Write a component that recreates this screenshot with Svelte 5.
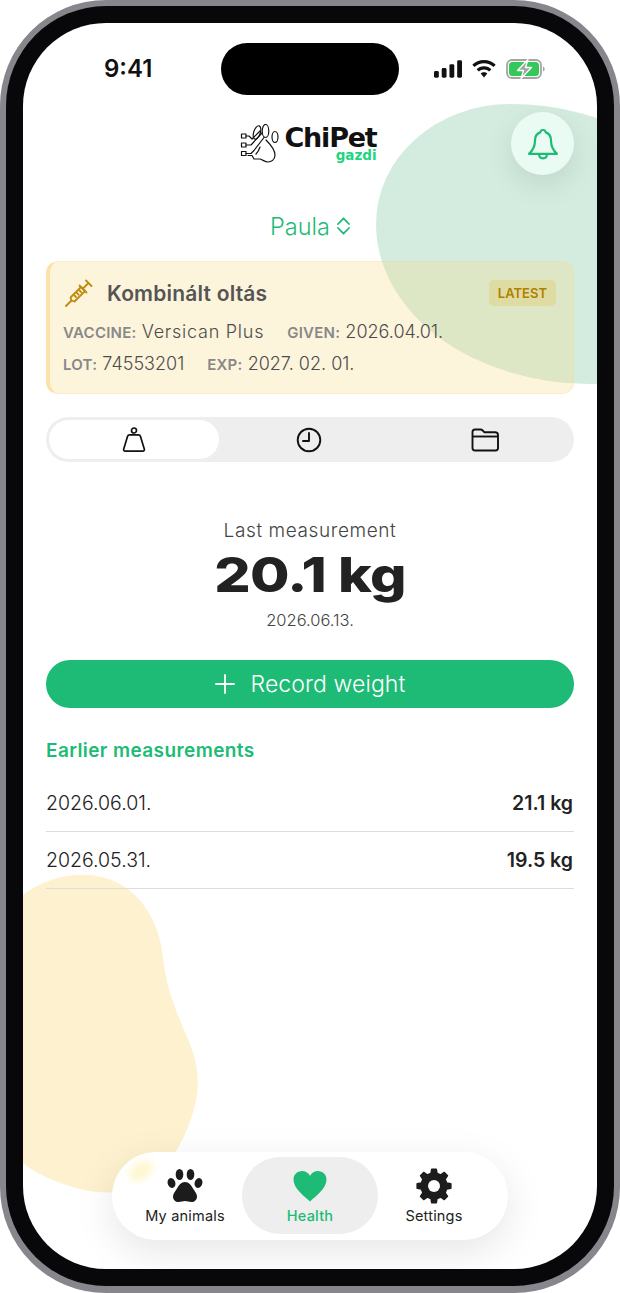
<script>
  const rows = [
    { date: '2026.06.01.', value: '21.1 kg' },
    { date: '2026.05.31.', value: '19.5 kg' }
  ]

  // gear outline for the settings tab, 8 teeth
  function gearPath(cx, cy, outer, inner, teeth) {
    const step = (Math.PI * 2) / teeth
    let d = ''
    for (let i = 0; i < teeth; i++) {
      const a = i * step - Math.PI / 2
      const pts = [
        [inner, a - step * 0.3],
        [outer, a - step * 0.17],
        [outer, a + step * 0.17],
        [inner, a + step * 0.3]
      ]
      for (const [r, t] of pts) {
        const x = (cx + r * Math.cos(t)).toFixed(2)
        const y = (cy + r * Math.sin(t)).toFixed(2)
        d += (d ? 'L' : 'M') + x + ' ' + y
      }
    }
    return d + 'Z'
  }
</script>

<div class="phone">
  <div class="bezel">
    <div class="screen">
      <div class="blob-green"></div>
      <svg class="blob-yellow" width="176" height="322" viewBox="0 0 176 322">
        <path d="M0 22C22 4 58-4 86 6c30 11 50 40 54 78 3 32 14 56 24 80 10 22 14 44 8 68-8 32-26 64-48 78-22 12-48 12-74 4C30 308 12 300 0 290Z" />
      </svg>

      <div class="status">
        <span class="time">9:41</span>
        <div class="island"></div>
        <div class="status-icons">
          <svg width="28" height="18" viewBox="0 0 29 18">
            <rect x="0" y="11" width="5" height="7" rx="1.500" />
            <rect x="8" y="8" width="5" height="10" rx="1.500" />
            <rect x="16" y="4" width="5" height="14" rx="1.500" />
            <rect x="24" y="0" width="5" height="18" rx="1.500" />
          </svg>
          <svg width="24" height="18" viewBox="0 0 24 18">
            <path d="M12 0C7.400 0 3.300 1.800.3 4.800l2.200 2.300C5 4.700 8.300 3.200 12 3.200s7 1.500 9.500 3.900l2.200-2.300C20.700 1.800 16.600 0 12 0Z" />
            <path d="M12 6.200c-2.900 0-5.500 1.100-7.400 3l2.200 2.300c1.400-1.300 3.200-2.100 5.200-2.100s3.800.8 5.200 2.100l2.200-2.300c-1.900-1.900-4.500-3-7.400-3Z" />
            <path d="M12 12.300c-1.300 0-2.500.5-3.300 1.300L12 17.400l3.300-3.800c-.8-.8-2-1.300-3.300-1.300Z" />
          </svg>
          <svg width="39" height="20" viewBox="0 0 39 20">
            <rect x="1" y="1" width="34" height="18" rx="5" fill="none" stroke="#a3a4a3" stroke-width="1.800" />
            <rect x="3" y="3" width="30" height="14" rx="3.500" fill="#34c759" />
            <path d="M37 7.500c1.100.4 1.700 1.300 1.700 2.500s-.6 2.100-1.700 2.500Z" fill="#a3a4a3" />
            <path d="M22 .5 11.500 11.500h6L15 19.500 25.500 8.500h-6Z" fill="#a3a4a3" stroke="#fff" stroke-width="1.300" stroke-linejoin="round" />
          </svg>
        </div>
      </div>

      <main class="content">
        <header class="top">
          <span></span>
          <div class="logo">
            <svg width="40" height="39" viewBox="0 0 40 39" fill="none" stroke="#111" stroke-width="1.200" stroke-linecap="round" stroke-linejoin="round">
              <rect x="1.500" y="10" width="4.500" height="4" />
              <rect x="1.500" y="19" width="4.500" height="4" />
              <rect x="1.500" y="27.500" width="4.500" height="4" />
              <ellipse cx="17" cy="8.500" rx="3.300" ry="7" transform="rotate(18 17 8.500)" />
              <ellipse cx="25.500" cy="7" rx="3.300" ry="6.500" />
              <ellipse cx="35" cy="13" rx="3" ry="5.500" />
              <path d="M6 12h3l3 3 8-8M6 21h5l11-12M6 29.500h5l3-3 10-13" />
              <path d="M26 16c3 3 9 9 9 15 0 5-4 7-7 7-3 0-5-2-8-3h-6l-2-3.500H8M20 23c-1 3-2 5-4 7" />
            </svg>
            <div class="logo-text">
              <span class="brand">ChiPet</span>
              <span class="sub">gazdi</span>
            </div>
          </div>
          <button class="bell" aria-label="Notifications">
            <svg width="32" height="32" viewBox="0 0 32 32" fill="none" stroke="#1dbb75" stroke-width="2.200" stroke-linecap="round" stroke-linejoin="round">
              <path d="M16 2c-1.500 0-2.500 1-2.700 2.400C9.800 5.500 8 8.800 8 12.500c0 6-1.500 9.500-6 13.300h28c-4.500-3.800-6-7.300-6-13.300 0-3.700-1.800-7-5.300-8.100C18.500 3 17.500 2 16 2Z" />
              <path d="M12 26c0 2.800 1.800 4.300 4 4.300s4-1.500 4-4.300" />
            </svg>
          </button>
        </header>

        <button class="pet">
          Paula
          <svg width="13" height="18" viewBox="0 0 13 18" fill="none" stroke="#1dbb75" stroke-width="1.800" stroke-linecap="round" stroke-linejoin="round">
            <path d="M1 7 6.500 1.300 12 7M1 11l5.500 5.700L12 11" />
          </svg>
        </button>

        <section class="vaccine">
          <div class="vaccine-head">
            <svg width="28" height="28" viewBox="0 0 28 28" fill="none" stroke="#c08a10" stroke-width="1.800" stroke-linecap="round" stroke-linejoin="round">
              <path d="M1 27l5.500-5.500" />
              <path d="M6.500 21.500l-1-3L16 8l4 4L9.500 22.500Z" />
              <path d="M14.500 6.500l7 7M18 9.500l5.500-5.500M21 1.500l5.500 5.500M9.500 16.500l1.500 1.500M12 14l1.500 1.500M14.500 11.500l1.500 1.500" />
            </svg>
            <h2>Kombinált oltás</h2>
            <span class="badge">LATEST</span>
          </div>
          <div class="vaccine-line">
            <span class="item"><b>VACCINE:</b> <span class="name">Versican Plus</span></span>
            <span class="item"><b>GIVEN:</b> 2026.04.01.</span>
          </div>
          <div class="vaccine-line">
            <span class="item"><b>LOT:</b> 74553201</span>
            <span class="item"><b>EXP:</b> 2027. 02. 01.</span>
          </div>
        </section>

        <div class="tabs">
          <button class="tab active" aria-label="Weight">
            <svg width="24" height="26" viewBox="0 0 24 26" fill="none" stroke="#111" stroke-width="1.700" stroke-linejoin="round">
              <circle cx="12" cy="3.500" r="2.500" />
              <path d="M7.500 7.800h9c1 0 1.600.5 1.900 1.400l3.900 12.800c.4 1.300-.3 2.200-1.600 2.200H3.300c-1.300 0-2-.9-1.600-2.200L5.600 9.200c.3-.9.900-1.400 1.900-1.400Z" />
            </svg>
          </button>
          <button class="tab" aria-label="History">
            <svg width="26" height="26" viewBox="0 0 26 26" fill="none" stroke="#111" stroke-width="1.900" stroke-linecap="round" stroke-linejoin="round">
              <circle cx="13" cy="13" r="11.300" />
              <path d="M13 6v8H7" />
            </svg>
          </button>
          <button class="tab" aria-label="Documents">
            <svg width="28" height="24" viewBox="0 0 28 24" fill="none" stroke="#111" stroke-width="1.900" stroke-linejoin="round">
              <path d="M1.500 4c0-1.500.8-2.500 2.500-2.500h5.500c1 0 1.600.4 2.200 1l1.800 1.800h10.500c1.500 0 3 .7 3 2.700v13c0 1.800-1 2.500-2.500 2.500H4c-1.700 0-2.500-.9-2.500-2.500Z" />
              <path d="M1.500 8.500h25" />
            </svg>
          </button>
        </div>

        <section class="last">
          <p class="last-label">Last measurement</p>
          <p class="last-value">20.1 kg</p>
          <p class="last-date">2026.06.13.</p>
        </section>

        <button class="record">
          <svg width="20" height="20" viewBox="0 0 20 20" fill="none" stroke="#fff" stroke-width="1.800" stroke-linecap="round">
            <path d="M10 1v18M1 10h18" />
          </svg>
          Record weight
        </button>

        <h3 class="earlier">Earlier measurements</h3>
        <ul class="list">
          {#each rows as row}
            <li>
              <span>{row.date}</span>
              <strong>{row.value}</strong>
            </li>
          {/each}
        </ul>
      </main>

      <nav class="nav">
        <span class="glare"></span>
        <button class="nav-item">
          <svg width="36" height="36" viewBox="0 0 36 36" fill="#1c1c1c">
            <ellipse cx="4.500" cy="15" rx="3.800" ry="5" transform="rotate(-18 4.500 15)" />
            <ellipse cx="12.500" cy="6.500" rx="3.800" ry="5.500" />
            <ellipse cx="23.500" cy="6.500" rx="3.800" ry="5.500" />
            <ellipse cx="31.500" cy="15" rx="3.800" ry="5" transform="rotate(18 31.500 15)" />
            <path d="M18 14c-4 0-6 3-8 6.500-2 3-4 5.500-4 8 0 3.500 2.500 5.500 5.500 5.500 2.500 0 4.500-1 6.500-1s4 1 6.500 1c3 0 5.500-2 5.500-5.500 0-2.500-2-5-4-8-2-3.500-4-6.500-8-6.500Z" />
          </svg>
          <span>My animals</span>
        </button>
        <button class="nav-item active">
          <svg width="36" height="36" viewBox="0 0 36 36" fill="#1dbb75">
            <path d="M18 33.500C12 28 1.500 20.500 1.500 11.500 1.500 6.500 5.500 3 10 3c3.300 0 6.300 1.700 8 4.800C19.700 4.700 22.700 3 26 3c4.500 0 8.500 3.500 8.500 8.500 0 9-10.500 16.500-16.500 22Z" />
          </svg>
          <span>Health</span>
        </button>
        <button class="nav-item">
          <svg width="36" height="36" viewBox="0 0 36 36">
            <path d={gearPath(18, 18, 17, 13, 8)} fill="#1c1c1c" stroke="#1c1c1c" stroke-width="1.500" stroke-linejoin="round" />
            <circle cx="18" cy="18" r="6" fill="#fff" />
          </svg>
          <span>Settings</span>
        </button>
      </nav>
    </div>
  </div>
</div>

<style>
  :global(body) {
    margin: 0;
    background: #fff;
  }
  p, h2, h3, ul {
    margin: 0;
    padding: 0;
  }
  button {
    border: 0;
    background: none;
    padding: 0;
    font: inherit;
    cursor: pointer;
  }
  .phone {
    width: 620px;
    height: 1293px;
    box-sizing: border-box;
    padding: 6px 6px 7px;
    border-radius: 106px;
    background: #87868c;
    font-family: Inter, sans-serif;
    color: #1c1c1c;
  }
  .bezel {
    height: 100%;
    box-sizing: border-box;
    padding: 17px;
    border-radius: 100px;
    background: #08080a;
  }
  .screen {
    position: relative;
    height: 100%;
    border-radius: 83px;
    background: #fff;
    overflow: hidden;
  }
  .blob-green {
    position: absolute;
    left: 353px;
    top: 81px;
    width: 319px;
    height: 280px;
    border-radius: 134px 185px 105px 214px / 120px 120px 160px 160px;
    background: #d3ecdf;
  }
  .blob-yellow {
    position: absolute;
    left: 0;
    top: 850px;
    fill: #fdf1cf;
  }

  .status {
    position: relative;
    display: grid;
    grid-template-columns: 1fr 178px 1fr;
    align-items: center;
    padding-top: 20px;
  }
  .time {
    padding-left: 81px;
    font-size: 24px;
    font-weight: 600;
    color: #111;
    line-height: 50px;
  }
  .island {
    height: 52px;
    border-radius: 26px;
    background: #000;
  }
  .status-icons {
    display: flex;
    align-items: center;
    gap: 10px;
    padding-left: 35px;
    fill: #111;
  }

  .content {
    position: relative;
    padding: 17px 23px 0;
  }
  .top {
    display: grid;
    grid-template-columns: 1fr auto 1fr;
    align-items: center;
  }
  .logo {
    display: flex;
    align-items: center;
    gap: 4px;
    margin-left: -3px;
  }
  .logo-text {
    display: flex;
    flex-direction: column;
    align-items: flex-end;
    margin-top: 1px;
  }
  .brand {
    font-family: "DejaVu Sans", sans-serif;
    font-size: 27px;
    font-weight: 700;
    line-height: 22px;
    letter-spacing: -1.200px;
    color: #111;
  }
  .sub {
    font-family: "DejaVu Sans", sans-serif;
    font-size: 13.500px;
    font-weight: 700;
    line-height: 12px;
    color: #1ed47f;
  }
  .bell {
    justify-self: end;
    display: flex;
    align-items: center;
    justify-content: center;
    width: 63px;
    height: 63px;
    border-radius: 50%;
    background: #eafbf4;
    box-shadow: 0 10px 30px rgba(0, 0, 0, 0.09);
  }

  .pet {
    display: flex;
    align-items: center;
    justify-content: center;
    gap: 7px;
    width: 100%;
    height: 30px;
    margin-top: 36px;
    font-size: 23.500px;
    font-weight: 300;
    color: #1dbb75;
  }

  .vaccine {
    height: 133px;
    box-sizing: border-box;
    margin-top: 20px;
    padding: 13px 17px 0 13px;
    border: 1px solid rgba(245, 215, 138, 0.25);
    border-left: 4px solid rgba(245, 205, 110, 0.45);
    border-radius: 12px;
    background: rgba(248, 218, 138, 0.3);
  }
  .vaccine-head {
    display: flex;
    align-items: center;
    gap: 14px;
    height: 36px;
    margin: 0 0 7px 2px;
  }
  .vaccine-head h2 {
    flex: 1;
    font-size: 21px;
    font-weight: 600;
    letter-spacing: 0.2px;
    color: #555;
  }
  .badge {
    padding: 5px 9px;
    border-radius: 5px;
    font-size: 13px;
    font-weight: 600;
    color: #b07f00;
    background: rgba(225, 195, 90, 0.32);
  }
  .vaccine-line {
    display: flex;
    gap: 23px;
    margin-top: 3px;
    font-size: 18px;
    font-weight: 300;
    line-height: 28px;
    color: #4c4c4c;
  }
  .vaccine-line b {
    font-size: 15px;
    font-weight: 600;
    letter-spacing: 0.25px;
    color: #888;
  }
  .name {
    letter-spacing: 0.75px;
  }

  .tabs {
    display: grid;
    grid-template-columns: 170px 180px 172px;
    height: 45px;
    box-sizing: border-box;
    margin-top: 23px;
    padding: 3px;
    border-radius: 23px;
    background: #eee;
  }
  .tab {
    display: flex;
    align-items: center;
    justify-content: center;
    border-radius: 20px;
  }
  .tab.active {
    background: #fff;
  }

  .last {
    margin-top: 57px;
    text-align: center;
  }
  .last-label {
    font-size: 19px;
    font-weight: 300;
    line-height: 24px;
    letter-spacing: 0.6px;
    color: #444;
  }
  .last-value {
    margin-top: 3px;
    font-size: 48px;
    font-weight: 800;
    line-height: 58px;
    letter-spacing: -0.5px;
    color: #222;
    transform: scaleX(1.19);
  }
  .last-date {
    margin-top: 6px;
    font-size: 16.500px;
    font-weight: 300;
    line-height: 20px;
    color: #444;
  }

  .record {
    display: flex;
    align-items: center;
    justify-content: center;
    gap: 16px;
    width: 100%;
    height: 48px;
    margin-top: 30px;
    border-radius: 24px;
    background: #1dbb75;
    font-size: 23px;
    font-weight: 300;
    letter-spacing: 0.1px;
    color: #fff;
  }

  .earlier {
    margin-top: 31px;
    font-size: 19px;
    font-weight: 600;
    line-height: 24px;
    letter-spacing: 0.4px;
    color: #1dbb75;
  }
  .list {
    margin-top: 12px;
    list-style: none;
  }
  .list li {
    display: flex;
    justify-content: space-between;
    align-items: center;
    height: 57px;
    box-sizing: border-box;
    border-bottom: 1px solid #ddd;
    font-size: 19.500px;
    font-weight: 300;
    color: #222;
  }
  .list strong {
    font-weight: 600;
    margin-right: 1px;
  }

  .nav {
    position: absolute;
    left: 89px;
    bottom: 29px;
    display: grid;
    grid-template-columns: 130px 136px 130px;
    width: 396px;
    height: 88px;
    box-sizing: border-box;
    padding: 5px 0 6px;
    border-radius: 44px;
    background: #fff;
    box-shadow: 0 12px 40px rgba(0, 0, 0, 0.1);
  }
  .glare {
    position: absolute;
    left: 16px;
    top: 10px;
    width: 26px;
    height: 18px;
    border-radius: 50%;
    background: #fff7d2;
    filter: blur(3px);
    transform: rotate(-35deg);
  }
  .nav-item {
    position: relative;
    display: flex;
    flex-direction: column;
    align-items: center;
    justify-content: flex-start;
    gap: 3px;
    padding-top: 11px;
    border-radius: 38px;
    font-size: 14.500px;
    font-weight: 400;
    letter-spacing: 0.2px;
    color: #222;
  }
  .nav-item:first-of-type {
    padding-left: 16px;
  }
  .nav-item:last-of-type {
    padding-right: 18px;
  }
  .nav-item.active {
    background: #eee;
    color: #1dbb75;
    font-weight: 500;
  }
</style>
